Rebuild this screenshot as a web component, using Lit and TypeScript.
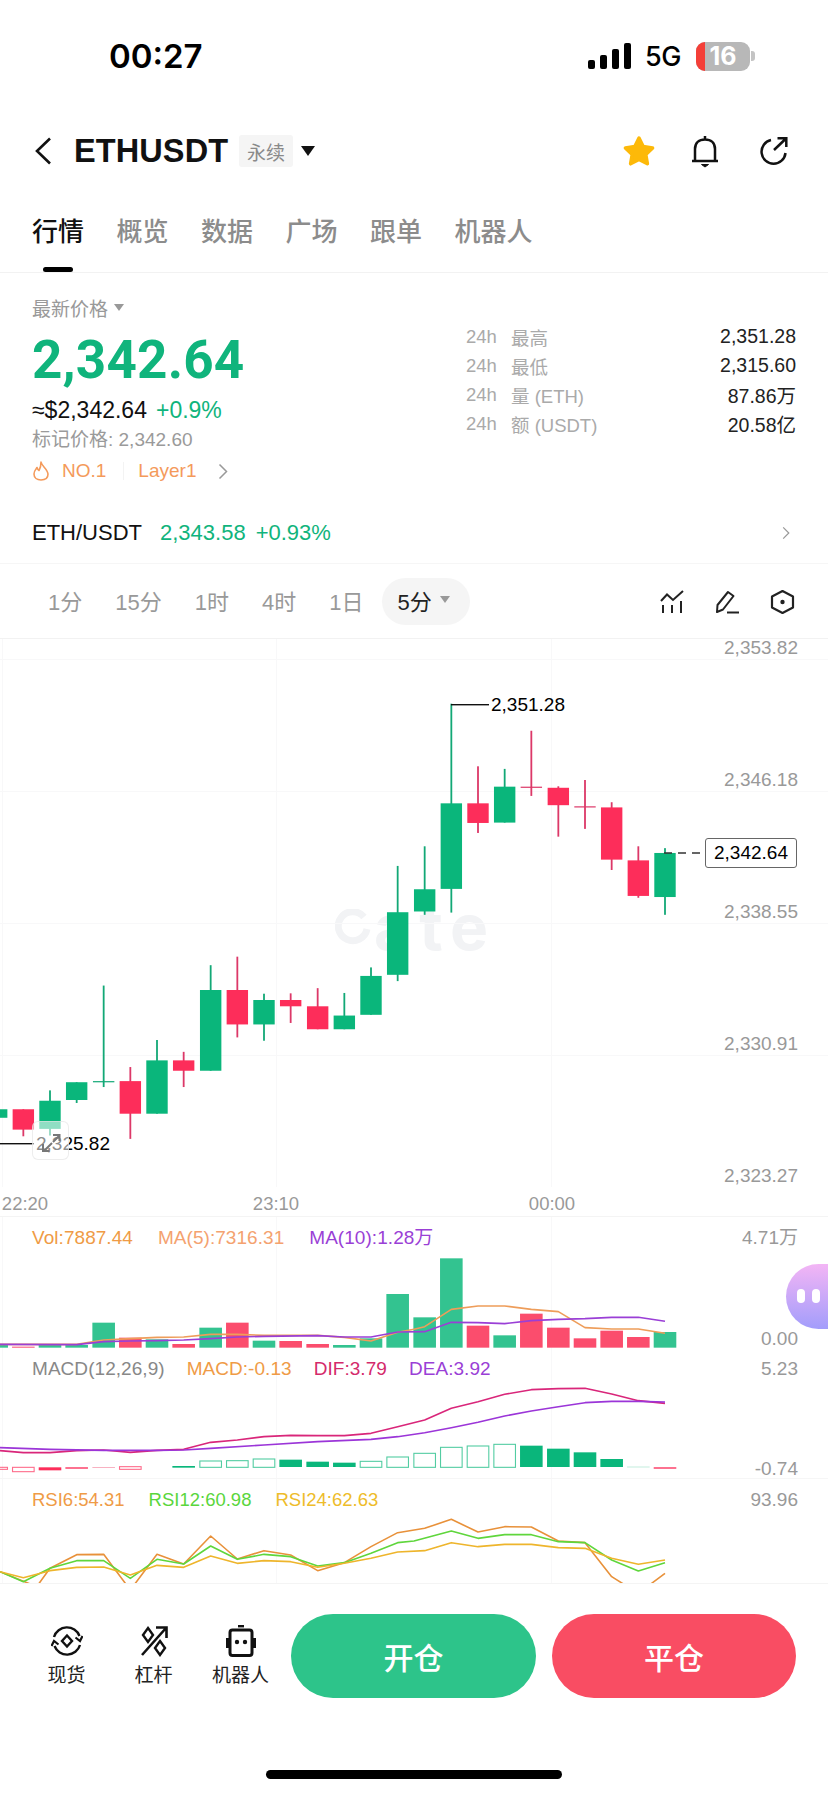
import { LitElement, html, css, svg } from 'lit';
import { customElement } from 'lit/decorators.js';

type Pt = [number, number];
// open candles traced from the chart: [x, wickTop, wickBottom, bodyTop, bodyBottom, up]
type Candle = [number, number, number, number, number, boolean];

const GREEN = '#0ab67b';
const RED = '#fd2d5a';
const GRID = '#f8f8f9';

const candles: Candle[] = [
  [-10, 1267, 1290, 1267, 1290, true],
  [70, 1267, 1340, 1267, 1322, false],
  [150, 1216, 1338, 1244, 1320, true],
  [230, 1194, 1250, 1194, 1242, true],
  [311, 933, 1207, 1191, 1193, true],
  [391, 1153, 1347, 1191, 1279, false],
  [471, 1080, 1279, 1135, 1279, true],
  [551, 1112, 1207, 1135, 1163, false],
  [632, 878, 1163, 945, 1163, true],
  [712, 855, 1073, 945, 1038, false],
  [792, 955, 1082, 972, 1038, true],
  [872, 954, 1034, 972, 989, false],
  [953, 940, 1051, 989, 1051, false],
  [1033, 953, 1051, 1014, 1051, true],
  [1113, 884, 1012, 907, 1012, true],
  [1193, 610, 921, 735, 904, true],
  [1274, 557, 742, 673, 733, true],
  [1354, 172, 736, 441, 672, true],
  [1434, 341, 521, 441, 494, false],
  [1514, 348, 493, 396, 493, true],
  [1594, 245, 421, 396, 398, false],
  [1675, 395, 531, 399, 446, false],
  [1755, 378, 510, 449, 451, false],
  [1835, 438, 621, 452, 593, false],
  [1915, 557, 696, 595, 691, false],
  [1995, 562, 742, 575, 694, true],
];

const volTops = [405, 410, 405, 405, 338, 383, 388, 402, 353, 338, 392, 393, 402, 405, 385, 252, 322, 145, 347, 376, 311, 353, 385, 362, 381, 366];

const ma5: Pt[] = [[0, 403], [230, 403], [311, 390], [391, 386], [471, 382], [551, 381], [632, 373], [712, 373], [792, 376], [953, 376], [1033, 382], [1113, 393], [1193, 367], [1242, 358], [1274, 350], [1354, 298], [1434, 288], [1514, 288], [1594, 298], [1675, 305], [1755, 353], [1835, 357], [1915, 357], [1995, 370]];
const ma10: Pt[] = [[0, 403], [230, 404], [311, 395], [391, 393], [471, 392], [551, 390], [632, 386], [712, 381], [792, 379], [953, 377], [1033, 381], [1113, 381], [1193, 366], [1274, 365], [1354, 337], [1434, 338], [1514, 341], [1594, 332], [1675, 328], [1755, 326], [1835, 322], [1915, 322], [1995, 334]];

const dif: Pt[] = [[0, 722], [70, 728], [150, 728], [230, 722], [311, 720], [391, 727], [471, 721], [551, 718], [632, 697], [712, 690], [792, 680], [872, 676], [953, 677], [1033, 677], [1113, 670], [1193, 650], [1274, 630], [1354, 595], [1434, 575], [1514, 553], [1594, 539], [1675, 536], [1755, 535], [1835, 552], [1915, 572], [1995, 580]];
const dea: Pt[] = [[0, 713], [150, 718], [311, 721], [471, 721], [551, 720], [632, 715], [792, 705], [953, 695], [1113, 688], [1193, 680], [1274, 668], [1354, 653], [1434, 637], [1514, 618], [1594, 603], [1675, 590], [1755, 578], [1835, 574], [1915, 574], [1995, 576]];

// [x, top, bottom, color, filled]
const macdBars: [number, number, number, string, boolean][] = [
  [-10, 772, 778, RED, false], [70, 772, 785, RED, false], [150, 772, 781, RED, true], [230, 772, 776, RED, true],
  [311, 772, 774, '#f58aa2', true], [391, 770, 778, RED, false], [551, 768, 773, GREEN, true], [632, 753, 772, GREEN, false],
  [712, 752, 772, GREEN, false], [792, 747, 772, GREEN, false], [872, 749, 771, GREEN, true], [953, 755, 771, GREEN, true],
  [1033, 758, 771, GREEN, true], [1113, 754, 772, GREEN, false], [1193, 741, 772, GREEN, false], [1274, 730, 772, GREEN, false],
  [1354, 712, 772, GREEN, false], [1434, 708, 772, GREEN, false], [1514, 703, 772, GREEN, false], [1594, 707, 771, GREEN, true],
  [1675, 716, 771, GREEN, true], [1755, 727, 771, GREEN, true], [1835, 747, 771, GREEN, true], [1915, 770, 772, '#a5e3cc', true],
  [1995, 772, 776, RED, true],
];

const rsi6: Pt[] = [[0, 1085], [110, 1130], [150, 1075], [230, 1034], [311, 1033], [391, 1140], [471, 1033], [551, 1062], [632, 978], [712, 1047], [792, 1022], [872, 1035], [953, 1082], [1033, 1058], [1113, 1010], [1193, 968], [1274, 955], [1354, 928], [1434, 966], [1514, 950], [1594, 951], [1675, 993], [1755, 998], [1835, 1100], [1915, 1150], [1995, 1090]];
const rsi12: Pt[] = [[0, 1085], [70, 1115], [150, 1075], [230, 1052], [311, 1052], [391, 1105], [471, 1048], [551, 1062], [632, 1008], [712, 1048], [792, 1033], [872, 1040], [953, 1068], [1033, 1058], [1113, 1030], [1193, 998], [1242, 993], [1354, 963], [1434, 985], [1514, 974], [1594, 974], [1675, 995], [1755, 998], [1835, 1050], [1915, 1083], [1995, 1058]];
const rsi24: Pt[] = [[0, 1085], [70, 1103], [150, 1082], [230, 1072], [311, 1071], [391, 1095], [471, 1066], [551, 1072], [632, 1038], [712, 1060], [792, 1052], [872, 1055], [953, 1072], [1033, 1060], [1113, 1045], [1193, 1026], [1274, 1022], [1354, 998], [1434, 1010], [1514, 1003], [1594, 1003], [1675, 1013], [1755, 1015], [1835, 1045], [1915, 1063], [1995, 1050]];

const sx = (v: number) => v / 3;
// main chart was traced at 2.7 per px, offset from the panel top at y=639
const my = (v: number) => v / 2.7 + 1;
// lower panels were traced at 3 per px from y=1210
const panelY = (top: number) => (v: number) => 1210 + v / 3 - top;

const VOL_TOP = 1217;
const MACD_TOP = 1353;
const RSI_TOP = 1479;

const line = (pts: Pt[], y: (v: number) => number, color: string, w = 1.6) => svg`
  <polyline points=${pts.map(([a, b]) => `${sx(a)},${y(b)}`).join(' ')} fill="none" stroke=${color} stroke-width=${w} stroke-linejoin="round" />`;

const vGrid = (h: number) => svg`${[2, 276, 551].map((x) => svg`<rect x=${x} y="0" width="1" height=${h} fill=${GRID} />`)}`;

@customElement('app-root')
export class AppRoot extends LitElement {
  static override styles = css`
    :host {
      display: block;
      width: 828px;
      height: 1795px;
      overflow: hidden;
      background: #fff;
      color: #111;
      font-family: 'Liberation Sans', 'Noto Sans CJK SC', sans-serif;
    }
    * {
      box-sizing: border-box;
    }
    svg {
      display: block;
    }
    .status {
      height: 112px;
      display: flex;
      align-items: center;
      padding: 0 73px 0 109px;
    }
    .time {
      font: 600 33px Inter, sans-serif;
      color: #000;
    }
    .status-right {
      margin-left: auto;
      display: flex;
      align-items: center;
    }
    .signal {
      display: flex;
      align-items: flex-end;
      gap: 5px;
      height: 26px;
      margin-right: 14px;
    }
    .signal i {
      width: 7px;
      background: #000;
      border-radius: 2px;
    }
    .fiveg {
      font: 500 27px Inter, sans-serif;
      color: #000;
      margin-right: 14px;
      width: 37px;
      letter-spacing: -0.5px;
      white-space: nowrap;
    }
    .battery {
      position: relative;
      width: 54px;
      height: 29px;
      border-radius: 9px;
      background: #b8b8b8;
      overflow: hidden;
      display: flex;
      align-items: center;
      justify-content: center;
      color: #fff;
      font: 700 25px Inter, sans-serif;
    }
    .battery::before {
      content: '';
      position: absolute;
      left: 0;
      top: 0;
      bottom: 0;
      width: 9px;
      background: #f43f38;
    }
    .nub {
      width: 4px;
      height: 10px;
      background: #c4c4c4;
      border-radius: 0 3px 3px 0;
      margin-left: 1px;
    }
    .nav {
      height: 78px;
      display: flex;
      align-items: center;
      padding: 0 40px 0 34px;
    }
    .symbol {
      font: 700 32.5px 'Liberation Sans', sans-serif;
      margin-left: 22px;
      width: 155px;
      letter-spacing: 0.1px;
    }
    .tag {
      margin-left: 10px;
      width: 54px;
      height: 32px;
      background: #f5f5f5;
      border-radius: 3px;
      color: #8a8a8a;
      font-size: 19px;
      display: flex;
      align-items: center;
      justify-content: center;
    }
    .caret {
      width: 0;
      height: 0;
      border-left: 7px solid transparent;
      border-right: 7px solid transparent;
      border-top: 10px solid #111;
      margin-left: 8px;
    }
    .nav-icons {
      margin-left: auto;
      display: flex;
      align-items: center;
      gap: 38px;
    }
    .star {
      margin-right: -4px;
    }
    .tabs {
      position: relative;
      height: 83px;
      display: flex;
      align-items: center;
      gap: 32.5px;
      padding: 0 32px 4px;
      border-bottom: 1px solid #f2f2f2;
      font: 500 26px 'Noto Sans CJK SC', sans-serif;
      color: #8c8c8c;
    }
    .tabs .active {
      color: #111;
    }
    .indicator {
      position: absolute;
      left: 43px;
      bottom: 0;
      width: 30px;
      height: 5px;
      border-radius: 3px;
      background: #000;
    }
    .summary {
      height: 230px;
      display: flex;
      justify-content: space-between;
      padding: 0 32px;
    }
    .price-col {
      padding-top: 22px;
      display: flex;
      flex-direction: column;
    }
    .last-label {
      display: flex;
      align-items: center;
      gap: 6px;
      height: 24px;
      font-size: 19px;
      color: #999;
    }
    .mini-caret {
      width: 0;
      height: 0;
      border-left: 5px solid transparent;
      border-right: 5px solid transparent;
      border-top: 7px solid #999;
    }
    .last {
      margin-top: 11px;
      height: 60px;
      line-height: 60px;
      font-size: 53px;
      font-weight: 700;
      color: #10b47c;
      font-family: Roboto, sans-serif;
      letter-spacing: 0.2px;
    }
    .usd {
      margin-top: 8px;
      height: 24px;
      line-height: 24px;
      font-size: 23px;
      display: flex;
      gap: 9px;
    }
    .up {
      color: #10b47c;
    }
    .mark {
      margin-top: 6px;
      height: 24px;
      line-height: 24px;
      font-size: 19px;
      color: #9a9a9a;
    }
    .rank {
      margin-top: 7px;
      height: 24px;
      display: flex;
      align-items: center;
      font-size: 19px;
      color: #f49a5b;
    }
    .rank .no {
      margin-left: 12px;
    }
    .rank .sep {
      width: 1px;
      height: 18px;
      background: #f3f3f3;
      margin: 0 14px 0 17px;
    }
    .rank .chev {
      margin-left: 22px;
    }
    .stats {
      width: 330px;
      padding-top: 49px;
    }
    .stat {
      height: 29px;
      display: flex;
      align-items: center;
      font-size: 18.5px;
      color: #aaa;
    }
    .stat .h {
      width: 45px;
    }
    .stat .val {
      margin-left: auto;
      font-size: 19.5px;
      color: #222;
    }
    .pair {
      height: 61px;
      display: flex;
      align-items: center;
      padding: 0 38px 0 32px;
      border-bottom: 1px solid #f6f6f6;
      font-size: 22px;
    }
    .pair .px {
      margin-left: 18px;
    }
    .pair .pct {
      margin-left: 10px;
    }
    .pair .chev {
      margin-left: auto;
    }
    .intervals {
      height: 75px;
      display: flex;
      align-items: center;
      gap: 33px;
      padding: 1px 33px 0 48px;
      border-bottom: 1px solid #f2f2f2;
      font-size: 22px;
      color: #999;
    }
    .intervals > span {
      margin-top: -4px;
    }
    .pill {
      margin-left: -14px;
      width: 88px;
      height: 47px;
      border-radius: 24px;
      background: #f5f5f5;
      display: flex;
      align-items: center;
      padding: 0 0 4px 15px;
      gap: 8px;
      color: #222;
    }
    .tools {
      margin-left: auto;
      display: flex;
      gap: 30px;
    }
    .panel {
      position: relative;
    }
    .panel > svg {
      position: absolute;
      left: 0;
      top: 0;
    }
    .main {
      height: 578px;
      border-bottom: 1px solid #f4f4f4;
    }
    .axis {
      position: absolute;
      right: 30px;
      font-size: 19px;
      line-height: 18px;
      color: #999;
    }
    .time-label {
      position: absolute;
      top: 554px;
      width: 60px;
      margin-left: -30px;
      text-align: center;
      font-size: 18.5px;
      line-height: 22px;
      color: #999;
    }
    .note {
      position: absolute;
      font-size: 19px;
      line-height: 22px;
      color: #000;
    }
    .last-tag {
      position: absolute;
      left: 705px;
      top: 199px;
      width: 92px;
      height: 30px;
      border: 1px solid #666;
      border-radius: 3px;
      background: #fff;
      font-size: 19px;
      color: #000;
      display: flex;
      align-items: center;
      justify-content: center;
    }
    .watermark {
      position: absolute;
      left: 335px;
      top: 268px;
      display: flex;
      align-items: center;
      gap: 3px;
      color: #f2f3f5;
      font: 700 64px/40px Inter, sans-serif;
      letter-spacing: 8px;
    }
    .expand {
      position: absolute;
      left: 32px;
      top: 482px;
      width: 37px;
      height: 39px;
      border: 1px solid rgba(225, 225, 225, 0.6);
      border-radius: 6px;
      background: rgba(255, 255, 255, 0.55);
    }
    .expand svg {
      margin: 2px 0 0 2px;
    }
    .legend {
      position: relative;
      display: flex;
      gap: 25px;
      padding-left: 32px;
      font-size: 19px;
      line-height: 22px;
      letter-spacing: 0.05px;
    }
    .vol {
      height: 136px;
      padding-top: 10px;
    }
    .macd {
      height: 126px;
      padding-top: 5px;
      border-bottom: 1px solid #f6f6f6;
    }
    .macd .legend {
      gap: 22px;
    }
    .rsi {
      height: 105px;
      padding-top: 10px;
      border-bottom: 1px solid #f4f4f4;
    }
    .rsi .legend {
      gap: 24px;
      font-size: 18.5px;
      letter-spacing: 0;
    }
    .bubble {
      position: absolute;
      left: 786px;
      top: 1264px;
      width: 42px;
      height: 65px;
      border-radius: 33px 0 0 33px;
      background: linear-gradient(180deg, #f3b5f5, #a29dfb);
      display: flex;
      gap: 7px;
      padding: 25px 0 0 11px;
    }
    .bubble i {
      width: 8px;
      height: 14px;
      border-radius: 4px;
      background: #fff;
    }
    .bar {
      display: flex;
      padding: 30px 32px 0 23px;
    }
    .action {
      width: 87px;
      padding-top: 11px;
      display: flex;
      flex-direction: column;
      align-items: center;
      font-size: 19px;
      color: #222;
    }
    .action svg {
      height: 32px;
    }
    .action span {
      margin-top: 5px;
      line-height: 28px;
      white-space: nowrap;
    }
    .cta {
      height: 84px;
      width: 245px;
      border-radius: 42px;
      display: flex;
      align-items: center;
      justify-content: center;
      color: #fff;
      font: 500 30px 'Noto Sans CJK SC', sans-serif;
    }
    .open {
      margin-left: 7px;
      background: #2dc48a;
    }
    .close {
      margin-left: 16px;
      width: 244px;
      background: #f94d63;
    }
    .home {
      width: 296px;
      height: 9px;
      margin: 72px auto 0;
      border-radius: 5px;
      background: #000;
    }
  `;

  private chevron(w: number, h: number, color: string) {
    return html`<svg class="chev" width=${w} height=${h} viewBox="0 0 10 16"><path d="M1.5 1 L8.5 8 L1.5 15" fill="none" stroke=${color} stroke-width="1.5"/></svg>`;
  }

  private mainChart() {
    const rows = [659, 791, 923, 1055].map((y) => y - 639);
    return html`<svg width="828" height="578">
      ${vGrid(548)}
      ${rows.map((y) => svg`<rect x="0" y=${y} width="828" height="1" fill=${GRID} />`)}
      ${candles.map(([x, wt, wb, bt, bb, up]) => {
        const fill = up ? GREEN : RED;
        const wick = up ? '#12a876' : '#dc3868';
        const h = Math.max(my(bb) - my(bt), 1.2);
        return svg`
          <rect x=${sx(x) - 0.9} y=${my(wt)} width="1.8" height=${my(wb) - my(wt)} fill=${wick} />
          <rect x=${sx(x) - 10.7} y=${my(bt)} width="21.4" height=${h} fill=${h < 2 ? wick : fill} />`;
      })}
      <rect x="451" y="65" width="38" height="1.4" fill="#111" />
      <rect x="0" y="504" width="34" height="1.4" fill="#111" />
      <line x1="664" y1="214" x2="704" y2="214" stroke="#333" stroke-width="1.4" stroke-dasharray="8 6" />
    </svg>`;
  }

  private volChart() {
    const y = panelY(VOL_TOP);
    return html`<svg width="828" height="136">
      ${vGrid(136)}
      ${volTops.map((top, i) => {
        const [x, , , , , up] = candles[i];
        return svg`<rect x=${sx(x) - 11.3} y=${y(top)} width="22.6" height=${y(413) - y(top)} fill=${up ? '#33c390' : '#fb4d6d'} />`;
      })}
      ${line(ma5, y, '#ee9d5a')}
      ${line(ma10, y, '#9a3fd6')}
    </svg>`;
  }

  private macdChart() {
    const y = panelY(MACD_TOP);
    return html`<svg width="828" height="125">
      ${vGrid(125)}
      ${macdBars.map(([x, t, b, color, filled]) =>
        filled
          ? svg`<rect x=${sx(x) - 11.3} y=${y(t)} width="22.6" height=${y(b) - y(t)} fill=${color} />`
          : svg`<rect x=${sx(x) - 10.8} y=${y(t)} width="21.6" height=${y(b) - y(t)} fill="none" stroke=${color} stroke-opacity="0.7" stroke-width="1.1" />`
      )}
      ${line(dif, y, '#d9267a')}
      ${line(dea, y, '#9b35d8')}
    </svg>`;
  }

  private rsiChart() {
    const y = panelY(RSI_TOP);
    return html`<svg width="828" height="104">
      ${vGrid(104)}
      ${line(rsi6, y, '#e8913a')}
      ${line(rsi12, y, '#5fd63c')}
      ${line(rsi24, y, '#eeb52c')}
    </svg>`;
  }

  override render() {
    return html`
      <div class="status">
        <span class="time">00:27</span>
        <div class="status-right">
          <div class="signal">
            <i style="height:9px"></i><i style="height:14px"></i><i style="height:20px"></i><i style="height:26px"></i>
          </div>
          <span class="fiveg">5G</span>
          <div class="battery">16</div>
          <div class="nub"></div>
        </div>
      </div>

      <div class="nav">
        <svg width="18" height="28" viewBox="0 0 18 28"><path d="M16 1.5 L3 14 L16 26.5" fill="none" stroke="#111" stroke-width="2.6"/></svg>
        <span class="symbol">ETHUSDT</span>
        <span class="tag">永续</span>
        <span class="caret"></span>
        <div class="nav-icons">
          <svg class="star" width="34" height="32" viewBox="0 0 34 32"><path d="M17 3 L21.2 11.6 L30.6 12.9 L23.8 19.5 L25.4 28.8 L17 24.4 L8.6 28.8 L10.2 19.5 L3.4 12.9 L12.8 11.6 Z" fill="#fdb909" stroke="#fdb909" stroke-width="3.5" stroke-linejoin="round"/></svg>
          <svg width="30" height="33" viewBox="0 0 30 33"><path d="M2 26 H28 M5 26 V14 C5 8 9 4.500 15 4.500 C21 4.500 25 8 25 14 V26 M15 1 V4.500" fill="none" stroke="#111" stroke-width="2.500"/><path d="M11.500 29.500 H18.500 L15 32 Z" fill="#111" stroke="#111"/></svg>
          <svg width="30" height="30" viewBox="0 0 30 30"><path d="M13 4 A12 12 0 1 0 27.500 17" fill="none" stroke="#111" stroke-width="2.500"/><path d="M16 14 L28 2.500 M19.500 2.200 H28.300 V11" fill="none" stroke="#111" stroke-width="2.500"/></svg>
        </div>
      </div>

      <div class="tabs">
        <span class="active">行情</span><span>概览</span><span>数据</span><span>广场</span><span>跟单</span><span>机器人</span>
        <div class="indicator"></div>
      </div>

      <div class="summary">
        <div class="price-col">
          <div class="last-label">最新价格<span class="mini-caret"></span></div>
          <div class="last">2,342.64</div>
          <div class="usd"><span>≈$2,342.64</span><span class="up">+0.9%</span></div>
          <div class="mark">标记价格: 2,342.60</div>
          <div class="rank">
            <svg width="18" height="20" viewBox="0 0 18 20"><path d="M9 1 C9.500 5 15.500 8 16 13 C16 17 13 19 9 19 C5 19 2 17 2 13 C2 10 4 8 5 6.500 C5.500 8 6 9 7 9.500 C8.500 7 9 4 9 1 Z" fill="none" stroke="#f49a5b" stroke-width="1.600" stroke-linejoin="round"/></svg>
            <span class="no">NO.1</span>
            <span class="sep"></span>
            <span>Layer1</span>
            ${this.chevron(10, 17, '#999')}
          </div>
        </div>
        <div class="stats">
          <div class="stat"><span class="h">24h</span>最高<span class="val">2,351.28</span></div>
          <div class="stat"><span class="h">24h</span>最低<span class="val">2,315.60</span></div>
          <div class="stat"><span class="h">24h</span>量 (ETH)<span class="val">87.86万</span></div>
          <div class="stat"><span class="h">24h</span>额 (USDT)<span class="val">20.58亿</span></div>
        </div>
      </div>

      <div class="pair">
        <span>ETH/USDT</span>
        <span class="up px">2,343.58</span>
        <span class="up pct">+0.93%</span>
        ${this.chevron(8, 14, '#999')}
      </div>

      <div class="intervals">
        <span>1分</span><span>15分</span><span>1时</span><span>4时</span><span>1日</span>
        <div class="pill">5分<span class="mini-caret"></span></div>
        <div class="tools">
          <svg width="25" height="24" viewBox="0 0 25 24"><path d="M1 11 L7 4.500 L13 10 L23 1" fill="none" stroke="#222" stroke-width="2"/><path d="M3 15 V23 M12 15 V23 M21 11 V23" stroke="#222" stroke-width="2"/></svg>
          <svg width="25" height="24" viewBox="0 0 25 24"><path d="M2 22 L2.500 15 L13 2 L18.500 6 L8 19.500 Z" fill="none" stroke="#222" stroke-width="2" stroke-linejoin="round"/><path d="M12 22.500 H24" stroke="#222" stroke-width="2"/></svg>
          <svg width="25" height="24" viewBox="0 0 25 24"><path d="M12.500 1 L23 6.500 V17.500 L12.500 23 L2 17.500 V6.500 Z" fill="none" stroke="#222" stroke-width="2.200" stroke-linejoin="round"/><circle cx="12.500" cy="12" r="2.200" fill="#222"/></svg>
        </div>
      </div>

      <div class="panel main">
        <div class="watermark">
          <svg width="36" height="36" viewBox="0 0 36 36"><path d="M29 8 A14.500 14.500 0 1 0 32 20" fill="none" stroke="#f2f3f5" stroke-width="7"/></svg>
          <span>ate</span>
        </div>
        ${this.mainChart()}
        <span class="axis" style="top:0">2,353.82</span>
        <span class="axis" style="top:132px">2,346.18</span>
        <span class="axis" style="top:264px">2,338.55</span>
        <span class="axis" style="top:396px">2,330.91</span>
        <span class="axis" style="top:528px">2,323.27</span>
        <span class="time-label" style="left:25px">22:20</span>
        <span class="time-label" style="left:276px">23:10</span>
        <span class="time-label" style="left:552px">00:00</span>
        <span class="note" style="left:491px;top:55px">2,351.28</span>
        <span class="note" style="left:36px;top:494px">2,325.82</span>
        <div class="last-tag">2,342.64</div>
        <div class="expand">
          <svg width="30" height="30" viewBox="0 0 30 30"><path d="M9 27 L17 19 M24 12 L18 18 M18 11 H24.500 V17 M8 20 V27 H14.500" fill="none" stroke="#777" stroke-width="2"/></svg>
        </div>
      </div>

      <div class="panel vol">
        ${this.volChart()}
        <div class="legend">
          <span style="color:#ef9b46">Vol:7887.44</span>
          <span style="color:#f4a26f">MA(5):7316.31</span>
          <span style="color:#9a3fd6">MA(10):1.28万</span>
        </div>
        <span class="axis" style="top:12px">4.71万</span>
        <span class="axis" style="top:113px">0.00</span>
      </div>

      <div class="panel macd">
        ${this.macdChart()}
        <div class="legend">
          <span style="color:#888">MACD(12,26,9)</span>
          <span style="color:#ef9b46">MACD:-0.13</span>
          <span style="color:#d42a6b">DIF:3.79</span>
          <span style="color:#9a3fd6">DEA:3.92</span>
        </div>
        <span class="axis" style="top:7px">5.23</span>
        <span class="axis" style="top:107px">-0.74</span>
      </div>

      <div class="panel rsi">
        ${this.rsiChart()}
        <div class="legend">
          <span style="color:#ef9b46">RSI6:54.31</span>
          <span style="color:#5ad63c">RSI12:60.98</span>
          <span style="color:#eebc2a">RSI24:62.63</span>
        </div>
        <span class="axis" style="top:12px">93.96</span>
      </div>

      <div class="bar">
        <div class="action">
          <svg width="32" height="32" viewBox="0 0 32 32"><path d="M3 12 A13.500 13.500 0 0 1 28.500 11 M29 20 A13.500 13.500 0 0 1 3.500 21" fill="none" stroke="#111" stroke-width="2.400"/><path d="M24.500 12.500 L29 16 L31.500 11 M7.500 19.500 L3 16 L.5 21" fill="none" stroke="#111" stroke-width="2.200"/><path d="M16 10.500 L21 16 L16 21.500 L11 16 Z" fill="none" stroke="#111" stroke-width="2.400"/></svg>
          <span>现货</span>
        </div>
        <div class="action">
          <svg width="30" height="32" viewBox="0 0 30 32"><path d="M3 30 L27 3 M17 2.500 H27.500 V13" fill="none" stroke="#111" stroke-width="2.600"/><path d="M9 3 L14 10 L9 17 L4 10 Z M21 16 L26 23 L21 30 L16 23 Z" fill="none" stroke="#111" stroke-width="2.400"/></svg>
          <span>杠杆</span>
        </div>
        <div class="action">
          <svg width="32" height="32" viewBox="0 0 32 32"><rect x="13" y="0" width="6" height="2.400" fill="#111"/><rect x="5" y="5" width="22" height="25.500" rx="2.500" fill="none" stroke="#111" stroke-width="3"/><rect x="1" y="13" width="3" height="10" fill="#111"/><rect x="28" y="13" width="3" height="10" fill="#111"/><circle cx="12" cy="17" r="2.200" fill="#111"/><circle cx="20" cy="17" r="2.200" fill="#111"/></svg>
          <span>机器人</span>
        </div>
        <div class="cta open">开仓</div>
        <div class="cta close">平仓</div>
      </div>
      <div class="home"></div>

      <div class="bubble"><i></i><i></i></div>
    `;
  }
}
